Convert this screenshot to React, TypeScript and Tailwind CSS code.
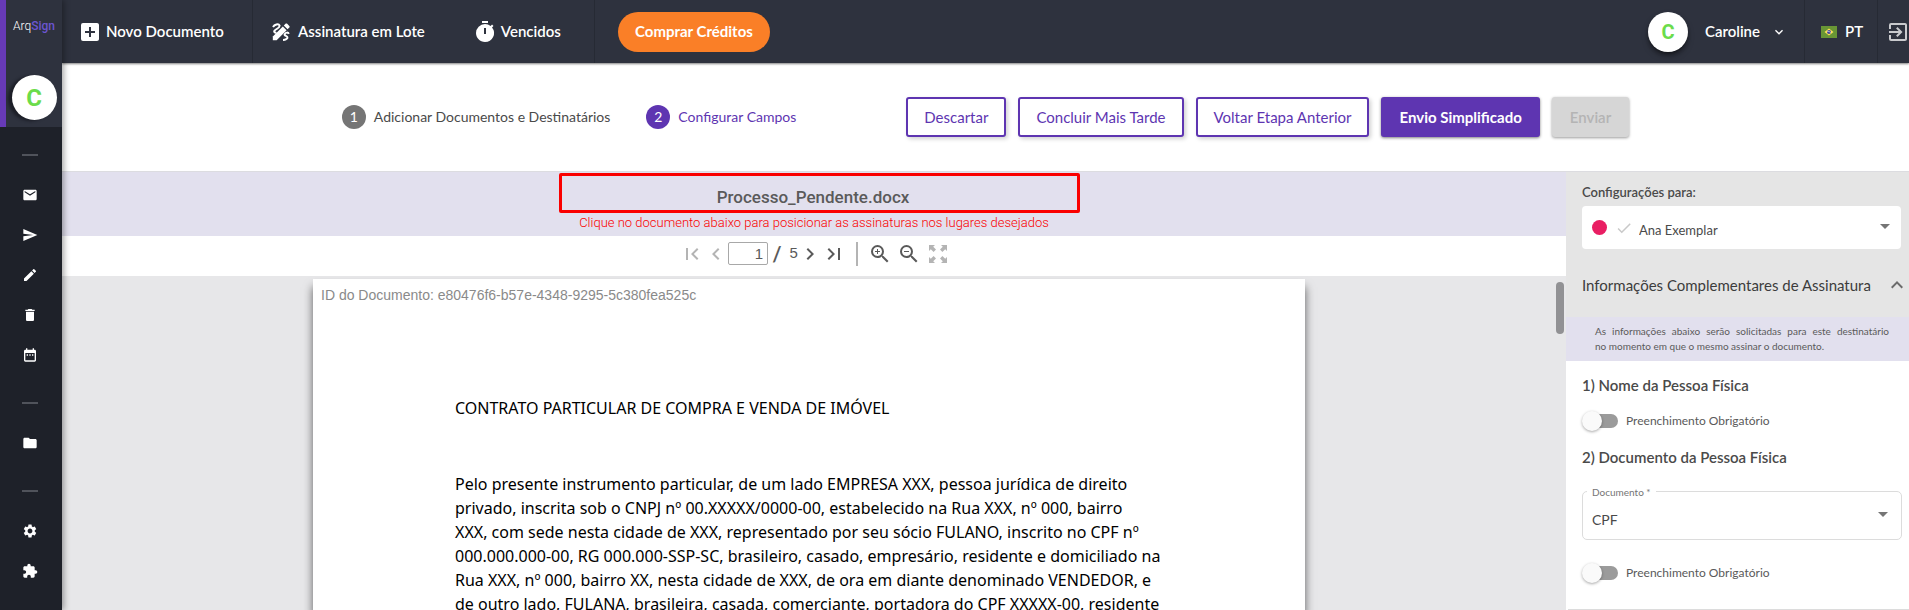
import type { ReactNode } from 'react';
import {
  MdAddBox,
  MdMail,
  MdSend,
  MdEdit,
  MdDelete,
  MdDateRange,
  MdFolder,
  MdSettings,
  MdExtension,
  MdTimer,
  MdExpandMore,
  MdExpandLess,
  MdExitToApp,
  MdFirstPage,
  MdLastPage,
  MdChevronLeft,
  MdChevronRight,
  MdZoomIn,
  MdZoomOut,
  MdArrowDropDown,
  MdCheck,
} from 'react-icons/md';

function SignPenIcon() {
  return (
    <svg viewBox="0 0 18 18" className="size-[18px]" fill="none" aria-hidden="true">
      <path d="M1 4C2.5 1.5 6.5 .2 7.5 2.4 8.4 4.6 4 6 2.6 7.6 1.6 9 3 10.2 4.6 9.6" stroke="#fff" strokeWidth="2" />
      <path d="M16.8 10.8c-.6-1.6-3-1.6-4 .2-1.2 2 2.2 1.600 2.600 3.200.4 1.600-2 2.800-4.400 2.800" stroke="#fff" strokeWidth="2" />
      <path d="M.8 13.400 10.800 3.500l3.800 3.800-10 9.900H.8z" fill="#fff" />
      <path d="m11.800 2.500 1.700-1.700c.5-.5 1.200-.5 1.700 0l2.100 2.100c.5.5.5 1.200 0 1.700l-1.700 1.700z" fill="#fff" />
    </svg>
  );
}

function FullscreenArrows() {
  return (
    <svg viewBox="0 0 20 20" className="size-5" fill="#b4b4b4" aria-hidden="true">
      <path d="M1 1h6L5.200 2.800 8 5.600 5.600 8 2.800 5.200 1 7z" />
      <path d="M19 1v6l-1.800-1.800L14.400 8 12 5.600l2.800-2.800L13 1z" />
      <path d="M1 19v-6l1.800 1.800L5.600 12 8 14.400l-2.800 2.800L7 19z" />
      <path d="M19 19h-6l1.800-1.800L12 14.400l2.400-2.400 2.800 2.800L19 13z" />
    </svg>
  );
}

function BrazilFlag() {
  return (
    <svg viewBox="0 0 16 12" className="h-3 w-4" aria-hidden="true">
      <path d="M0 0h16v12H0z" fill="#699635" />
      <path d="M8 2.500 12.500 6 8 9.500 3.500 6z" fill="#ffe15a" />
      <circle cx="8" cy="6" r="2" fill="#41479b" />
      <path d="M6.200 5.400c1.300-.2 2.600.2 3.600 1.200" stroke="#fff" strokeWidth=".6" fill="none" />
    </svg>
  );
}

function SideLink({ label, children }: { label: string; children: ReactNode }) {
  return (
    <a href="#" aria-label={label} className="flex h-10 w-full items-center justify-center text-base text-white">
      {children}
    </a>
  );
}

function SideDivider() {
  return <div className="h-[2px] w-4 bg-[#50535b]" />;
}

function Sidebar() {
  return (
    <aside className="relative z-20 flex w-[62px] shrink-0 flex-col bg-[#1e2129] shadow-[2px_0_6px_rgba(0,0,0,0.35)]">
      <div className="flex h-[127px] shrink-0 flex-col items-center border-l-[6px] border-[#673ab7] bg-[#2e323e] pt-[18px]">
        <a href="#" className="font-[Roboto,sans-serif] text-xs leading-4 font-light text-white">
          Arq<span className="font-medium text-[#6c55d0]">Sign</span>
        </a>
        <div className="mt-[41px] flex size-[45px] items-center justify-center rounded-full bg-white font-[Roboto,sans-serif] text-2xl font-bold text-[#6bdc4b] shadow-[-4px_1px_3px_rgba(20,22,28,0.7)]">
          C
        </div>
      </div>
      <nav className="flex w-[60px] flex-col items-center pt-[27px]">
        <SideDivider />
        <div className="w-full pt-[19px] pb-[27px]">
          <SideLink label="Entrada"><MdMail /></SideLink>
          <SideLink label="Enviados"><MdSend /></SideLink>
          <SideLink label="Rascunhos"><MdEdit /></SideLink>
          <SideLink label="Lixeira"><MdDelete /></SideLink>
          <SideLink label="Agenda"><MdDateRange /></SideLink>
        </div>
        <SideDivider />
        <div className="w-full pt-[19px] pb-[27px]">
          <SideLink label="Pastas"><MdFolder /></SideLink>
        </div>
        <SideDivider />
        <div className="w-full pt-[19px]">
          <SideLink label="Ajustes"><MdSettings /></SideLink>
          <SideLink label="Extensões"><MdExtension /></SideLink>
        </div>
      </nav>
    </aside>
  );
}

function Header() {
  return (
    <header className="relative z-10 flex h-[63px] shrink-0 items-stretch bg-[#2e323e] text-[15px] font-semibold text-white shadow-[0_1px_2px_rgba(0,0,0,0.5)]">
      <a href="#" className="flex w-[191px] items-center gap-1 border-r border-[#262a34] pl-4">
        <MdAddBox className="size-6" />
        Novo Documento
      </a>
      <div className="flex w-[342px] items-center border-r border-[#262a34] pl-[19px]">
        <a href="#" className="flex items-center gap-2">
          <SignPenIcon />
          Assinatura em Lote
        </a>
        <a href="#" className="ml-12 flex items-center gap-1">
          <MdTimer className="size-6" />
          Vencidos
        </a>
      </div>
      <div className="flex items-center pl-[23px]">
        <button type="button" className="h-10 rounded-full bg-[#fa7f27] px-[17px] font-bold">
          Comprar Créditos
        </button>
      </div>
      <button type="button" className="ml-auto flex items-center pr-[17px]">
        <span className="mr-[17px] flex size-10 items-center justify-center rounded-full bg-white font-[Roboto,sans-serif] text-xl font-bold text-[#6bdc4b] shadow-md shadow-black/50">
          C
        </span>
        Caroline
        <MdExpandMore className="ml-[11px] size-4" />
      </button>
      <button type="button" className="flex w-[74px] items-center gap-2 border-x border-[#262a34] pl-4">
        <BrazilFlag />
        PT
      </button>
      <button type="button" aria-label="Sair" className="flex w-[31px] items-center pl-2">
        <MdExitToApp className="size-6 shrink-0 text-[#c9cacd]" />
      </button>
    </header>
  );
}

function Step({ n, label, active }: { n: number; label: string; active?: boolean }) {
  return (
    <div className="flex items-center gap-2">
      <span
        className={`flex size-6 items-center justify-center rounded-full text-sm text-white ${active ? 'bg-[#5e35b1]' : 'bg-[#757575]'}`}
      >
        {n}
      </span>
      <span className={`text-sm ${active ? 'text-[#5e35b1]' : 'text-[#4a4a4a]'}`}>{label}</span>
    </div>
  );
}

const outlined =
  'h-10 rounded-[3px] border-2 border-[#5e35b1] bg-white px-4 text-[#5e35b1] shadow-[2px_2px_4px_rgba(0,0,0,0.18)]';

function Actions() {
  return (
    <div className="flex items-center gap-3 text-[15px]">
      <button type="button" className={outlined}>Descartar</button>
      <button type="button" className={outlined}>Concluir Mais Tarde</button>
      <button type="button" className={outlined}>Voltar Etapa Anterior</button>
      <button type="button" className="h-10 rounded-[3px] bg-[#5e35b1] px-[18px] font-bold text-white shadow-[0_1px_3px_rgba(0,0,0,0.5)]">
        Envio Simplificado
      </button>
      <button type="button" disabled className="h-10 rounded-[3px] bg-[#d6d6d6] px-[18px] font-semibold text-[#b4b4b4] shadow-[0_1px_3px_rgba(0,0,0,0.4)]">
        Enviar
      </button>
    </div>
  );
}

function ViewerToolbar() {
  return (
    <div className="flex h-10 shrink-0 items-center justify-center bg-white pb-[5px] text-[#5a5a5a]">
      <button type="button" aria-label="Primeira página" className="text-[#b4b4b4]"><MdFirstPage className="size-6" /></button>
      <button type="button" aria-label="Página anterior" className="text-[#b4b4b4]"><MdChevronLeft className="size-6" /></button>
      <input
        aria-label="Página"
        defaultValue="1"
        className="h-[23px] w-10 rounded-xs border border-[#a8a8a8] px-1 text-right font-[Liberation_Sans,sans-serif] text-[15px]"
      />
      <span className="ml-1 text-xl font-bold">/</span>
      <span className="ml-2 font-[Liberation_Sans,sans-serif] text-[15px]">5</span>
      <button type="button" aria-label="Próxima página"><MdChevronRight className="size-6" /></button>
      <button type="button" aria-label="Última página"><MdLastPage className="size-6" /></button>
      <div className="mx-[10px] h-6 w-[2px] bg-[#b4b4b4]" />
      <button type="button" aria-label="Ampliar"><MdZoomIn className="size-6" /></button>
      <button type="button" aria-label="Reduzir" className="ml-[5px]"><MdZoomOut className="size-6" /></button>
      <button type="button" aria-label="Tela cheia" className="ml-[7px]"><FullscreenArrows /></button>
    </div>
  );
}

const lines = [
  'Pelo presente instrumento particular, de um lado EMPRESA XXX, pessoa jurídica de direito',
  'privado, inscrita sob o CNPJ nº 00.XXXXX/0000-00, estabelecido na Rua XXX, nº 000, bairro',
  'XXX, com sede nesta cidade de XXX, representado por seu sócio FULANO, inscrito no CPF nº',
  '000.000.000-00, RG 000.000-SSP-SC, brasileiro, casado, empresário, residente e domiciliado na',
  'Rua XXX, nº 000, bairro XX, nesta cidade de XXX, de ora em diante denominado VENDEDOR, e',
  'de outro lado, FULANA, brasileira, casada, comerciante, portadora do CPF XXXXX-00, residente',
];

function DocumentPage() {
  return (
    <div className="flex min-h-0 flex-1 overflow-hidden bg-[#e7e7e9] pt-[3px]">
      <div className="min-w-0 flex-1">
        <article className="mx-auto h-full w-[992px] bg-white pt-2 font-[Noto_Sans,sans-serif] text-base leading-6 text-black shadow-[0_8px_9px_rgba(0,0,0,0.6)]">
          <p className="pl-2 font-[Liberation_Sans,sans-serif] text-sm leading-4 text-[#8a8a8a]">
            ID do Documento: e80476f6-b57e-4348-9295-5c380fea525c
          </p>
          <div className="pl-[142px] whitespace-nowrap">
            <h1 className="pt-[93px]">CONTRATO PARTICULAR DE COMPRA E VENDA DE IMÓVEL</h1>
            <p className="pt-[52px]">
              {lines.map((line) => (
                <span key={line} className="block">{line}</span>
              ))}
            </p>
          </div>
        </article>
      </div>
      <div className="w-[10px] shrink-0 pt-[3px]">
        <div className="h-[52px] w-2 rounded-full bg-[#919194]" />
      </div>
    </div>
  );
}

function Toggle({ id }: { id: string }) {
  return (
    <div className="flex items-center gap-2 text-[#5a5a5a]">
      <span className="relative flex h-5 w-9 items-center">
        <input id={id} type="checkbox" role="switch" className="peer ml-[6px] h-[14px] w-[30px] appearance-none rounded-full bg-[#9b9b9b]" />
        <span className="pointer-events-none absolute top-0 left-0 size-5 rounded-full bg-[#fafafa] shadow-[0_1px_3px_rgba(0,0,0,0.35)] peer-checked:left-4" />
      </span>
      <label htmlFor={id} className="text-xs">Preenchimento Obrigatório</label>
    </div>
  );
}

function ConfigPanel() {
  return (
    <aside className="flex w-[343px] shrink-0 flex-col overflow-hidden bg-white text-[#4a4a4a]">
      <div className="bg-[#e5e5e5] pr-2 pl-4">
        <label htmlFor="signer" className="block pt-3 text-[13px] leading-4 font-semibold">Configurações para:</label>
        <div className="relative mt-[6px] flex h-[43px] items-center rounded-[4px] bg-white">
          <span className="ml-[10px] size-[15px] shrink-0 rounded-full bg-[#e91e63]" />
          <MdCheck className="ml-2 size-[18px] shrink-0 text-[#c9c9c9]" />
          <select id="signer" className="h-full w-full appearance-none bg-transparent pt-[6px] pl-[6px] text-[13px] text-[#4a4a4a]">
            <option>Ana Exemplar</option>
          </select>
          <MdArrowDropDown className="pointer-events-none absolute top-2 right-1 size-6 text-[#757575]" />
        </div>
        <button type="button" className="mt-1 flex h-16 w-full items-center justify-between text-left text-[15px] text-[#3c3c3c]">
          Informações Complementares de Assinatura
          <MdExpandLess className="-mr-2 size-6 text-[#6b6b6b]" />
        </button>
      </div>
      <p className="bg-[#e2e0ee] py-[7px] pr-5 pl-[29px] text-[10px] leading-[15px] text-[#5a5a5a]">
        <span className="block [text-align-last:justify]">As informações abaixo serão solicitadas para este destinatário</span>{' '}
        <span className="block">no momento em que o mesmo assinar o documento.</span>
      </p>
      <div className="flex flex-col pt-[14px] pr-[7px] pl-4">
        <h2 className="text-[15px] leading-5 font-semibold">1) Nome da Pessoa Física</h2>
        <div className="pt-4"><Toggle id="name-required" /></div>
        <h2 className="pt-4 text-[15px] leading-5 font-semibold">2) Documento da Pessoa Física</h2>
        <div className="relative mt-6 h-[49px] rounded-[5px] border border-[#dcdcdc]">
          <label htmlFor="doc-type" className="absolute -top-2 left-1 bg-white px-[5px] text-[10px] leading-4 text-[#757575]">
            Documento *
          </label>
          <select id="doc-type" className="h-full w-full appearance-none bg-transparent pt-2 pl-[9px] text-sm text-[#4a4a4a]">
            <option>CPF</option>
          </select>
          <MdArrowDropDown className="pointer-events-none absolute top-[10px] right-[6px] size-6 text-[#757575]" />
        </div>
        <div className="pt-[23px]"><Toggle id="doc-required" /></div>
      </div>
      <div className="mt-[26px] ml-[2px] h-px bg-[#dcdcdc]" />
    </aside>
  );
}

export default function App() {
  return (
    <div className="flex h-screen overflow-hidden bg-white font-[Lato,sans-serif]">
      <Sidebar />
      <div className="flex min-w-0 flex-1 flex-col">
        <Header />
        <div className="flex h-[109px] shrink-0 items-center justify-center gap-[110px] border-b border-[#dcdce0] bg-white">
          <div className="flex items-center gap-9">
            <Step n={1} label="Adicionar Documentos e Destinatários" />
            <Step n={2} label="Configurar Campos" active />
          </div>
          <Actions />
        </div>
        <div className="flex min-h-0 flex-1">
          <main className="flex min-w-0 flex-1 flex-col">
            <div className="flex h-16 shrink-0 flex-col items-center bg-[#e2e0ee] pt-px font-[Roboto,sans-serif]">
              <h1 className="ml-[10px] flex h-10 w-[521px] items-center justify-center rounded-[2px] border-3 border-[#fa0000] pt-2 pr-3 text-[17px] leading-5 font-medium text-[#5a5a5a]">
                Processo_Pendente.docx
              </h1>
              <p className="text-[13px] leading-5 font-light text-[#fa0000]">
                Clique no documento abaixo para posicionar as assinaturas nos lugares desejados
              </p>
            </div>
            <ViewerToolbar />
            <DocumentPage />
          </main>
          <ConfigPanel />
        </div>
      </div>
    </div>
  );
}
